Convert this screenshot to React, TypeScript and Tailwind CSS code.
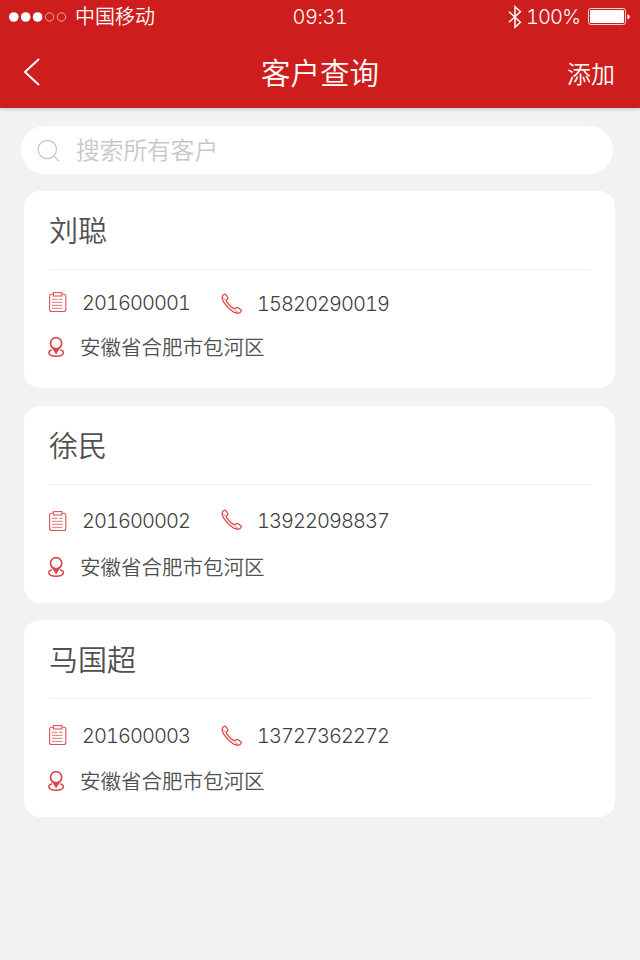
const FONT = 'font-["Inter","Noto_Sans_CJK_SC",sans-serif]';

type Customer = {
  name: string;
  id: string;
  phone: string;
  address: string;
  idIcon: string;
  idText: string;
  phoneIcon: string;
  phoneText: string;
  addressRow: string;
};

const customers: Customer[] = [
  {
    name: '刘聪', id: '201600001', phone: '15820290019', address: '安徽省合肥市包河区',
    idIcon: 'mt-[22px]', idText: 'mt-[22px]', phoneIcon: 'mt-[23px]', phoneText: 'mt-[23px]', addressRow: 'h-[66px]',
  },
  {
    name: '徐民', id: '201600002', phone: '13922098837', address: '安徽省合肥市包河区',
    idIcon: 'mt-[26px]', idText: 'mt-[25px]', phoneIcon: 'mt-[24px]', phoneText: 'mt-[25px]', addressRow: 'h-[61px]',
  },
  {
    name: '马国超', id: '201600003', phone: '13727362272', address: '安徽省合肥市包河区',
    idIcon: 'mt-[26px]', idText: 'mt-[26px]', phoneIcon: 'mt-[26px]', phoneText: 'mt-[26px]', addressRow: 'h-[61px]',
  },
];

function ClipboardIcon() {
  return (
    <svg className="block h-[22px] w-[18px]" viewBox="0 0 18 22" fill="none" stroke="#dc5457">
      <rect x="0.6" y="2.3" width="16.2" height="17.2" rx="2" strokeWidth="1.1" />
      <rect x="4.5" y="0.6" width="8.4" height="3.4" fill="#fff" strokeWidth="1.1" />
      <path d="M3 7.4H8.6M10 7.4H13.6M3 10.4H13.6M3 13.4H13.6M3 16.4H13.6" stroke="#e79293" strokeWidth="1.3" />
    </svg>
  );
}

function PhoneIcon() {
  return (
    <svg className="block h-[22px] w-[22px]" viewBox="0 0 22 22" fill="none" stroke="#dc4a4d" strokeWidth="1.3" strokeLinejoin="round">
      <path d="M1.3 3.4C1.8 2.2 3.2 1 3.9 1.1C4.8 1.3 7.1 4.2 6.9 5.2C6.8 5.9 5.5 6.6 5.4 7.5C5.4 9.4 11.4 15.4 13.6 15.7C14.6 15.8 15.1 14.4 16 14.4C17.1 14.4 20.1 16.7 20.3 17.7C20.4 18.6 18.6 19.9 17.2 20.2C12.5 20.9-.1 9.1 1.3 3.4Z" />
      <path d="M2 4.4C2.8 6.1 4 7 5.2 7.5M13.6 16.1C14.2 17.4 15.4 18.7 17 19.2" strokeWidth="0.7" />
    </svg>
  );
}

function PinIcon() {
  return (
    <svg className="block h-[22px] w-[18px]" viewBox="0 0 18 22" fill="none" stroke="#d9494b" strokeWidth="1.7">
      <path d="M4 12.7C2 13.3.8 14.3.8 15.6C.8 17.9 4.1 19.3 8.1 19.3S15.4 17.9 15.4 15.6C15.4 14.3 14.2 13.3 12.2 12.7" strokeWidth="1.5" />
      <circle cx="8.1" cy="6.2" r="5.6" />
      <path d="M3 9.6Q8.1 12.6 13.2 9.6L8.1 17.4Z" fill="#d9494b" stroke="none" />
    </svg>
  );
}

function StatusBar() {
  return (
    <div className="grid h-[34px] grid-cols-3 items-start text-xl font-[350] leading-[33px]">
      <div className="flex items-center pl-[9px]">
        <svg className="h-[12px] w-[60px]" viewBox="0 0 60 12" fill="#fff">
          <circle cx="4.8" cy="6" r="4.8" />
          <circle cx="16.7" cy="6" r="4.8" />
          <circle cx="28.6" cy="6" r="4.8" />
          <circle cx="40.6" cy="6" r="4.2" fill="none" stroke="#f2a5a5" strokeWidth="1" />
          <circle cx="52.5" cy="6" r="4.2" fill="none" stroke="#f2a5a5" strokeWidth="1" />
        </svg>
        <span className="-mb-px ml-[6px] mt-px whitespace-nowrap">中国移动</span>
      </div>
      <div className="mt-px text-center font-light tabular-nums tracking-[-0.4px]">09:31</div>
      <div className="flex items-center justify-end pr-[10px]">
        <svg className="h-[24px] w-[14px]" viewBox="0 0 14 24" fill="none" stroke="#fff" strokeWidth="1.5">
          <path d="M1 6.8 12.4 17.2 7 22.2V1.8L12.4 6.8 1 17.2" />
        </svg>
        <span className="-mb-px ml-[4px] mt-px font-light tabular-nums tracking-[-0.9px]">100%</span>
        <svg className="ml-[8px] h-[18px] w-[42px]" viewBox="0 0 42 18">
          <rect x="0.5" y="0.5" width="37" height="16" rx="2.2" fill="none" stroke="#fff" strokeOpacity="0.8" />
          <rect x="2" y="2" width="34" height="13" rx="1" fill="#fff" />
          <path d="M39.4 6Q41.8 7 41.8 8.7T39.4 11.5Z" fill="#fff" />
        </svg>
      </div>
    </div>
  );
}

function CustomerCard({ customer }: { customer: Customer }) {
  return (
    <article className="flex h-[197px] flex-col rounded-[16px] bg-white px-[25px] text-[#505050]">
      <h2 className="h-[79px] shrink-0 border-b border-[#f0f0f0] text-[29px] font-[350] leading-[82px]">{customer.name}</h2>
      <div className="grid flex-1 grid-cols-[33px_139px_36px_1fr] items-start whitespace-nowrap text-[20px] font-light leading-[22px] text-[#404040] tabular-nums">
        <span className={customer.idIcon}><ClipboardIcon /></span>
        <span className={`${customer.idText} tracking-[-0.95px]`}>{customer.id}</span>
        <span className={customer.phoneIcon}><PhoneIcon /></span>
        <span className={`${customer.phoneText} tracking-[-0.95px]`}>{customer.phone}</span>
      </div>
      <div className={`-ml-px flex shrink-0 items-start pt-[15px] ${customer.addressRow}`}>
        <PinIcon />
        <span className="ml-[14px] whitespace-nowrap text-[20.5px] font-[350] leading-[22px]">{customer.address}</span>
      </div>
    </article>
  );
}

export default function App() {
  return (
    <div className={`h-[960px] w-[640px] overflow-hidden bg-[#f2f2f2] ${FONT}`}>
      <header className="h-[108px] bg-[#cd1d1d] text-white shadow-[0_1px_4px_rgba(0,0,0,0.2)]">
        <StatusBar />
        <div className="grid h-[74px] grid-cols-3 grid-rows-[74px] items-start">
          <button className="pl-[23px] pt-[24px]" aria-label="返回">
            <svg className="h-[28px] w-[17px]" viewBox="0 0 17 28" fill="none" stroke="#fff" strokeWidth="2">
              <path d="M16 1 2 14 16 27" />
            </svg>
          </button>
          <h1 className="pt-[2px] text-center text-[29.5px] font-[350] leading-[74px]">客户查询</h1>
          <button className="pr-[25px] pt-[4px] text-right text-2xl font-[350] leading-[74px]">添加</button>
        </div>
      </header>
      <main className="pt-[18px]">
        <label className="ml-[21px] flex h-[48px] w-[592px] items-center rounded-full bg-white pl-[16px]">
          <svg className="mt-px h-[24px] w-[24px]" viewBox="0 0 24 24" fill="none" stroke="#c4c4c4" strokeWidth="1.2">
            <circle cx="10.3" cy="10.5" r="9.2" />
            <path d="M17 17.2 22 22.2" />
          </svg>
          <span className="ml-[15px] mt-[2px] text-[23.7px] font-[350] text-[#c8c8c8]">搜索所有客户</span>
        </label>
        <section className="ml-[24px] mt-[17px] flex w-[591px] flex-col gap-[17.5px]">
          {customers.map((customer) => (
            <CustomerCard key={customer.id} customer={customer} />
          ))}
        </section>
      </main>
    </div>
  );
}
